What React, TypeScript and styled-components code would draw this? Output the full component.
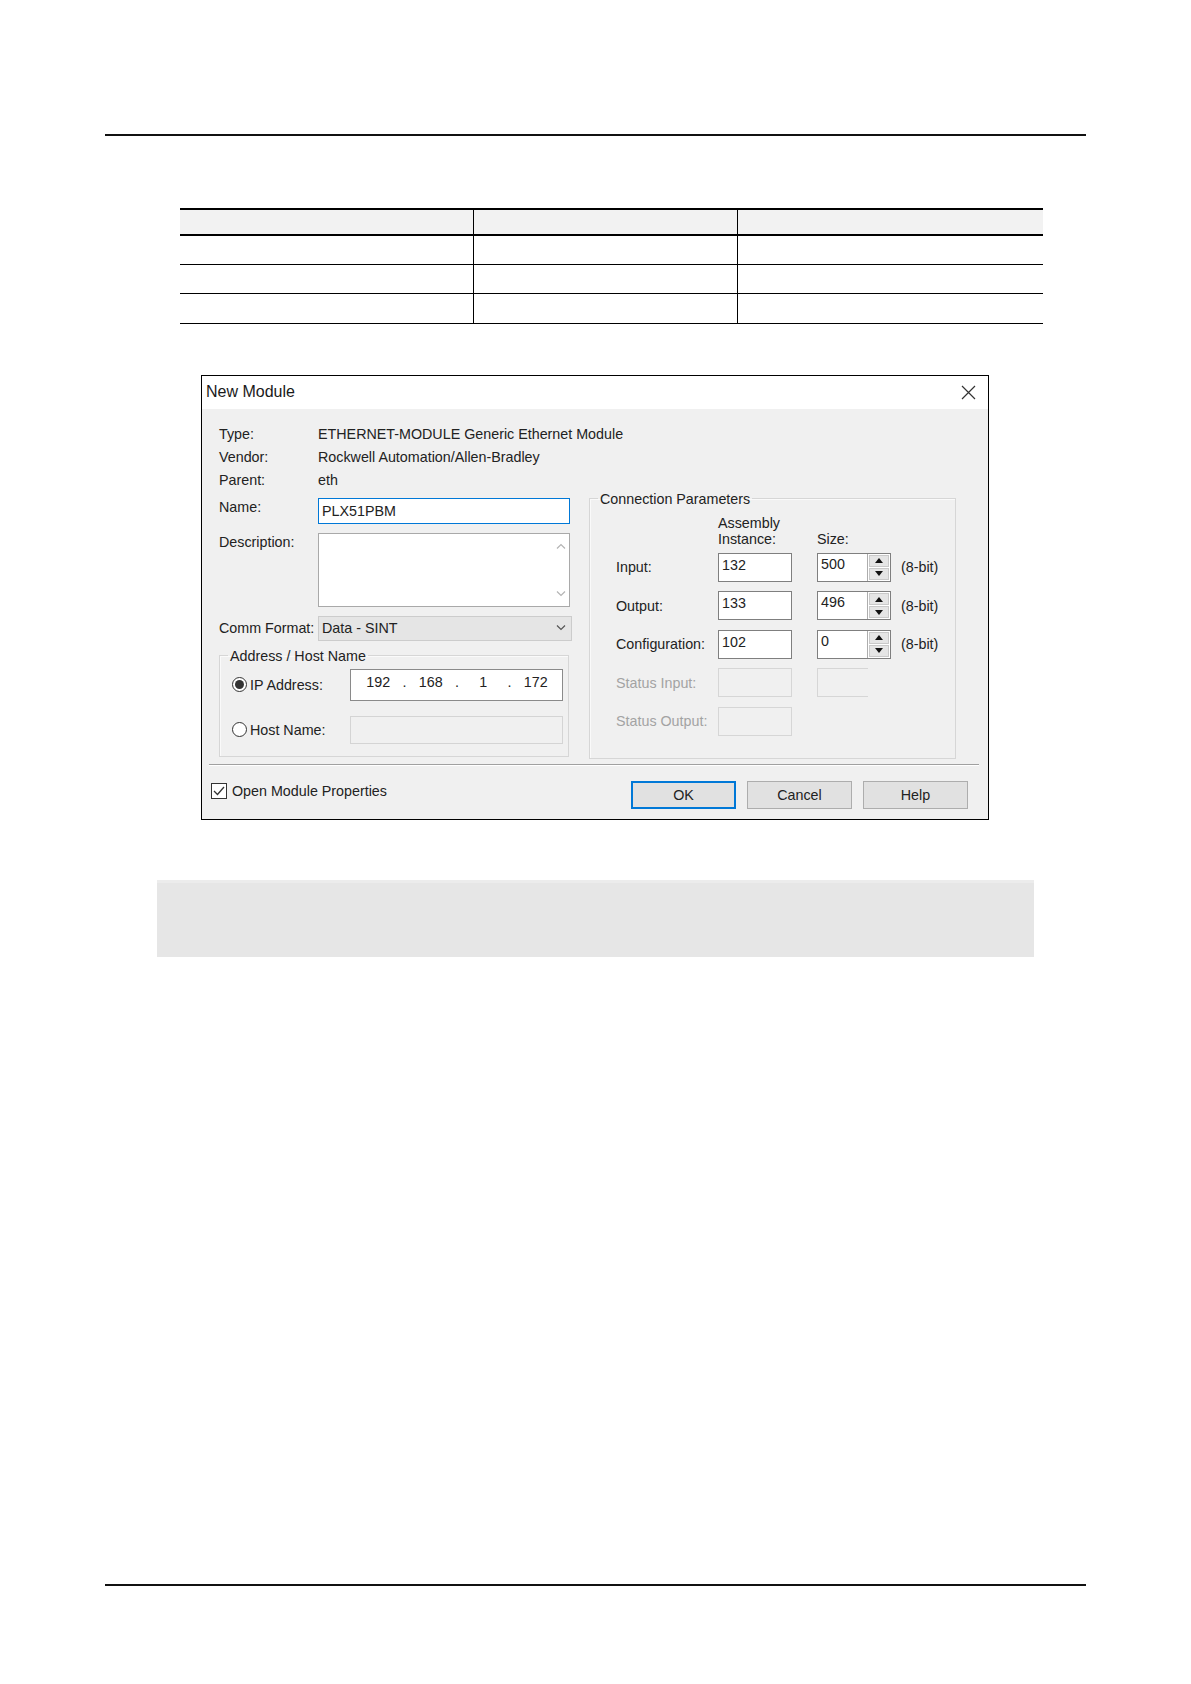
import React from "react";
import styled, { createGlobalStyle, css } from "styled-components";

const GlobalStyle = createGlobalStyle`
  * { box-sizing: border-box; }
  body {
    margin: 0;
    background: #fff;
    font-family: "Liberation Sans", Arial, sans-serif;
  }
`;

const Page = styled.div`
  width: 1191px;
  height: 1684px;
  display: flex;
  flex-direction: column;
  padding: 134px 0 98px;
`;

const Rule = styled.div<{ $auto?: boolean }>`
  margin-left: 105px;
  margin-top: ${(p) => (p.$auto ? "auto" : "0")};
  width: 981px;
  height: 2px;
  background: #111;
`;

const SpecTable = styled.table`
  margin: 72px 0 0 180px;
  width: 863px;
  border-collapse: collapse;
  table-layout: fixed;
`;

const HeadCell = styled.th<{ $w: number }>`
  width: ${(p) => p.$w}px;
  height: 26px;
  padding: 0;
  background: #f2f2f2;
  border-top: 2px solid #000;
  border-bottom: 2px solid #000;
  & + & {
    border-left: 1px solid #000;
  }
`;

const Cell = styled.td<{ $h: number }>`
  height: ${(p) => p.$h}px;
  padding: 0;
  border-bottom: 1px solid #000;
  & + & {
    border-left: 1px solid #000;
  }
`;

/* ---------- dialog ---------- */

const Dialog = styled.div`
  margin: 51px 0 0 201px;
  width: 788px;
  height: 445px;
  border: 1px solid #000;
  background: #f0f0f0;
  display: flex;
  flex-direction: column;
  color: #222;
  font-size: 14.3px;
`;

const TitleBar = styled.div`
  height: 33px;
  background: #fff;
  display: flex;
  align-items: center;
  justify-content: space-between;
  padding: 0 12px 0 4px;
`;

const Title = styled.span`
  font-size: 16px;
  color: #1a1a1a;
`;

const Content = styled.div`
  padding: 14px 0 0 17px;
`;

const InfoRow = styled.div`
  display: flex;
  height: 23px;
  line-height: 23px;
`;

const Label = styled.span<{ $muted?: boolean }>`
  width: 99px;
  flex-shrink: 0;
  color: ${(p) => (p.$muted ? "#a3a3a3" : "#222")};
`;

const Columns = styled.div`
  display: flex;
  gap: 17px;
  margin-top: -2px;
`;

const LeftCol = styled.div`
  width: 353px;
  display: flex;
  flex-direction: column;
`;

const FieldRow = styled.div<{ $top: number; $center?: boolean }>`
  display: flex;
  align-items: ${(p) => (p.$center ? "center" : "flex-start")};
  margin-top: ${(p) => p.$top}px;
  line-height: 18px;
`;

const NameInput = styled.div`
  width: 252px;
  height: 26px;
  border: 1px solid #0078d7;
  background: #fff;
  padding: 0 3px;
  line-height: 24px;
`;

const DescBox = styled.div`
  width: 252px;
  height: 74px;
  border: 1px solid #a9a9a9;
  background: #fff;
  display: flex;
  justify-content: flex-end;
`;

const ScrollTrack = styled.div`
  width: 17px;
  display: flex;
  flex-direction: column;
  justify-content: space-between;
  align-items: center;
  padding: 9px 0 9px;
`;

const Dropdown = styled.div`
  width: 254px;
  height: 25px;
  border: 1px solid #cccccc;
  background: #e5e5e5;
  display: flex;
  align-items: center;
  justify-content: space-between;
  padding: 0 5px 0 3px;
  line-height: 20px;
`;

const Group = styled.fieldset<{ $w: number; $h?: number }>`
  margin: 0;
  padding: 0;
  min-width: 0;
  width: ${(p) => p.$w}px;
  ${(p) => p.$h && `height: ${p.$h}px;`}
  border: 1px solid #d6d6d6;
  box-shadow: inset 1px 1px 0 #fafafa;
`;

const Legend = styled.legend`
  margin-left: 8px;
  padding: 0 2px;
  line-height: 18px;
  font-size: 14.3px;
`;

const AddressGroup = styled(Group)`
  margin-top: 6px;
`;

const AddressBody = styled.div`
  padding: 4px 5px 12px 12px;
`;

const RadioRow = styled.div<{ $top?: number }>`
  display: flex;
  align-items: center;
  margin-top: ${(p) => p.$top ?? 0}px;
`;

const RadioLabel = styled.label`
  width: 118px;
  display: flex;
  align-items: center;
  gap: 3px;
`;

const Radio = styled.span<{ $on?: boolean }>`
  width: 15px;
  height: 15px;
  flex-shrink: 0;
  border-radius: 50%;
  border: 1px solid #333;
  background: #fff;
  display: flex;
  align-items: center;
  justify-content: center;
  &::after {
    content: "";
    width: 9px;
    height: 9px;
    border-radius: 50%;
    background: ${(p) => (p.$on ? "#333" : "transparent")};
  }
`;

const IpBox = styled.div`
  width: 213px;
  height: 32px;
  border: 1px solid #8a8a8a;
  background: #fff;
  display: flex;
  padding: 3px 0 0 1px;
  line-height: 18px;
`;

const Octet = styled.span`
  width: 53px;
  text-align: center;
`;

const Dot = styled.span`
  width: 0;
  display: flex;
  justify-content: center;
`;

const HostBox = styled.div`
  width: 213px;
  height: 28px;
  border: 1px solid #d4d4d4;
  background: #f0f0f0;
`;

/* ---------- connection parameters ---------- */

const ConnBody = styled.div`
  padding: 7px 0 0 26px;
`;

const paramCols = css`
  display: grid;
  grid-template-columns: 102px 99px 84px auto;
`;

const ParamHead = styled.div`
  ${paramCols};
  height: 32px;
  line-height: 16px;
  margin-bottom: 6px;
  align-items: end;
`;

const ParamRows = styled.div`
  ${paramCols};
  grid-auto-rows: 29px;
  row-gap: 9.5px;
  align-items: center;
`;

const NumBox = styled.div<{ $off?: boolean; $open?: boolean }>`
  width: ${(p) => (p.$open ? 51 : 74)}px;
  height: 29px;
  border: 1px solid ${(p) => (p.$off ? "#d6d6d6" : "#7f7f7f")};
  ${(p) => p.$open && "border-right: none;"}
  background: ${(p) => (p.$off ? "#f0f0f0" : "#fff")};
  padding: 2px 3px;
  line-height: 18px;
`;

const SizeField = styled.div`
  width: 74px;
  height: 29px;
  display: flex;
  border: 1px solid #7f7f7f;
  background: #fff;
`;

const SizeValue = styled.div`
  flex: 1;
  padding: 1px 3px;
  line-height: 18px;
`;

const Spinner = styled.div`
  width: 23px;
  display: flex;
  flex-direction: column;
  border-left: 1px solid #adadad;
  padding: 1px;
  gap: 1px;
`;

const SpinBtn = styled.div`
  flex: 1;
  background: #e5e5e5;
  border: 1px solid #c9c9c9;
  display: flex;
  align-items: center;
  justify-content: center;
`;

const Bits = styled.span`
  padding-left: 0;
`;

/* ---------- footer ---------- */

const Separator = styled.div`
  margin: 5px 0 0 7px;
  width: 770px;
  border-top: 1px solid #a0a0a0;
  border-bottom: 1px solid #fff;
`;

const Footer = styled.div`
  flex: 1;
  display: flex;
  align-items: flex-start;
  justify-content: space-between;
  padding: 15px 20px 0 9px;
`;

const CheckRow = styled.label`
  display: flex;
  align-items: center;
  gap: 5px;
  margin-top: 2px;
`;

const CheckBox = styled.span`
  width: 16px;
  height: 16px;
  border: 1px solid #333;
  background: #fff;
  display: flex;
  align-items: center;
  justify-content: center;
`;

const Buttons = styled.div`
  display: flex;
  gap: 11px;
`;

const Button = styled.button<{ $default?: boolean }>`
  width: 105px;
  height: 28px;
  background: #e1e1e1;
  border: ${(p) => (p.$default ? "2px solid #0078d7" : "1px solid #adadad")};
  font-family: "Liberation Sans", Arial, sans-serif;
  font-size: 14.3px;
  color: #222;
  padding: 0;
`;

const GrayNote = styled.div`
  margin: 60px 0 0 157px;
  width: 877px;
  height: 77px;
  background: #e6e6e6;
  border-top: 3px solid #ececec;
`;

const Chevron = ({ dir, color, w = 10 }: { dir: "up" | "down"; color: string; w?: number }) => (
  <svg width={w} height="6" viewBox="0 0 10 6">
    <path
      d={dir === "up" ? "M1 5.5 L5 1.5 L9 5.5" : "M1 0.5 L5 4.5 L9 0.5"}
      fill="none"
      stroke={color}
      strokeWidth="1.2"
    />
  </svg>
);

const Tri = ({ dir }: { dir: "up" | "down" }) => (
  <svg width="8" height="5" viewBox="0 0 8 5">
    <path d={dir === "up" ? "M0 5 L4 0 L8 5 Z" : "M0 0 L4 5 L8 0 Z"} fill="#111" />
  </svg>
);

const SizeSpin = ({ value }: { value: string }) => (
  <SizeField>
    <SizeValue>{value}</SizeValue>
    <Spinner>
      <SpinBtn>
        <Tri dir="up" />
      </SpinBtn>
      <SpinBtn>
        <Tri dir="down" />
      </SpinBtn>
    </Spinner>
  </SizeField>
);

const params = [
  { label: "Input:", inst: "132", size: "500" },
  { label: "Output:", inst: "133", size: "496" },
  { label: "Configuration:", inst: "102", size: "0" },
];

const rowHeights = [29, 29, 30];

export default function App() {
  return (
    <Page>
      <GlobalStyle />
      <Rule />

      <SpecTable>
        <thead>
          <tr>
            <HeadCell $w={293} />
            <HeadCell $w={264} />
            <HeadCell $w={306} />
          </tr>
        </thead>
        <tbody>
          {rowHeights.map((h, i) => (
            <tr key={i}>
              <Cell $h={h} />
              <Cell $h={h} />
              <Cell $h={h} />
            </tr>
          ))}
        </tbody>
      </SpecTable>

      <Dialog>
        <TitleBar>
          <Title>New Module</Title>
          <svg width="15" height="15" viewBox="0 0 15 15">
            <path d="M1 1 L14 14 M14 1 L1 14" stroke="#333" strokeWidth="1.2" fill="none" />
          </svg>
        </TitleBar>

        <Content>
          <InfoRow>
            <Label>Type:</Label>
            <span>ETHERNET-MODULE Generic Ethernet Module</span>
          </InfoRow>
          <InfoRow>
            <Label>Vendor:</Label>
            <span>Rockwell Automation/Allen-Bradley</span>
          </InfoRow>
          <InfoRow>
            <Label>Parent:</Label>
            <span>eth</span>
          </InfoRow>

          <Columns>
            <LeftCol>
              <FieldRow $top={8}>
                <Label>Name:</Label>
                <NameInput>PLX51PBM</NameInput>
              </FieldRow>
              <FieldRow $top={9}>
                <Label>Description:</Label>
                <DescBox>
                  <ScrollTrack>
                    <Chevron dir="up" color="#b4b4b4" />
                    <Chevron dir="down" color="#b4b4b4" />
                  </ScrollTrack>
                </DescBox>
              </FieldRow>
              <FieldRow $top={9} $center>
                <Label>Comm Format:</Label>
                <Dropdown>
                  <span>Data - SINT</span>
                  <Chevron dir="down" color="#555" />
                </Dropdown>
              </FieldRow>

              <AddressGroup $w={350}>
                <Legend>Address / Host Name</Legend>
                <AddressBody>
                  <RadioRow>
                    <RadioLabel>
                      <Radio $on />
                      IP Address:
                    </RadioLabel>
                    <IpBox>
                      <Octet>192</Octet>
                      <Dot>.</Dot>
                      <Octet>168</Octet>
                      <Dot>.</Dot>
                      <Octet>1</Octet>
                      <Dot>.</Dot>
                      <Octet>172</Octet>
                    </IpBox>
                  </RadioRow>
                  <RadioRow $top={15}>
                    <RadioLabel>
                      <Radio />
                      Host Name:
                    </RadioLabel>
                    <HostBox />
                  </RadioRow>
                </AddressBody>
              </AddressGroup>
            </LeftCol>

            <Group $w={367} $h={269}>
              <Legend>Connection Parameters</Legend>
              <ConnBody>
                <ParamHead>
                  <span />
                  <span>
                    Assembly
                    <br />
                    Instance:
                  </span>
                  <span>Size:</span>
                  <span />
                </ParamHead>
                <ParamRows>
                  {params.map((p) => (
                    <React.Fragment key={p.label}>
                      <Label>{p.label}</Label>
                      <NumBox>{p.inst}</NumBox>
                      <SizeSpin value={p.size} />
                      <Bits>(8-bit)</Bits>
                    </React.Fragment>
                  ))}
                  <Label $muted>Status Input:</Label>
                  <NumBox $off />
                  <NumBox $off $open />
                  <span />
                  <Label $muted>Status Output:</Label>
                  <NumBox $off />
                  <span />
                  <span />
                </ParamRows>
              </ConnBody>
            </Group>
          </Columns>
        </Content>

        <Separator />
        <Footer>
          <CheckRow>
            <CheckBox>
              <svg width="12" height="10" viewBox="0 0 12 10">
                <path d="M1 5 L4.5 8.5 L11 1" fill="none" stroke="#333" strokeWidth="1.3" />
              </svg>
            </CheckBox>
            Open Module Properties
          </CheckRow>
          <Buttons>
            <Button $default>OK</Button>
            <Button>Cancel</Button>
            <Button>Help</Button>
          </Buttons>
        </Footer>
      </Dialog>

      <GrayNote />
      <Rule $auto />
    </Page>
  );
}
